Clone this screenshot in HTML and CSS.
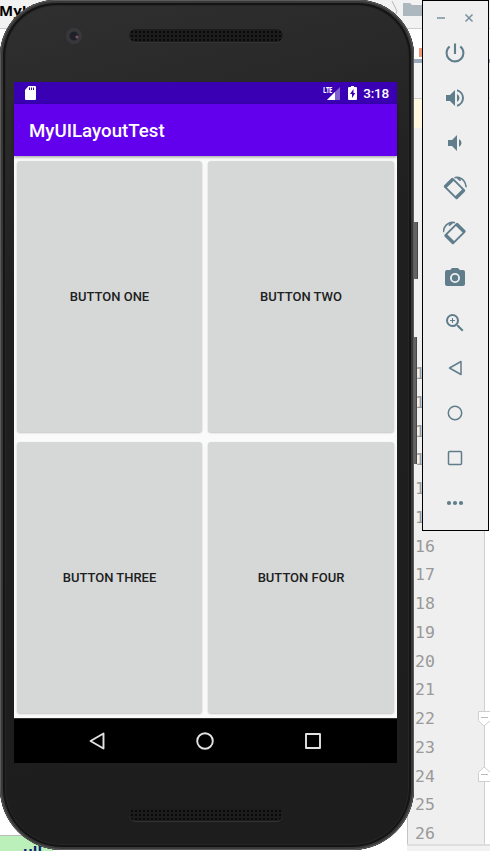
FILE: index.html
```html
<!DOCTYPE html>
<html lang="en">
<head>
<meta charset="utf-8">
<title>Emulator</title>
<link rel="stylesheet" href="styles.css">
</head>
<body>
<div class="desktop">
  <div class="ide">
    <div class="crumbs"><b>MyUI</b>
      <svg class="crumb-icons" width="46" height="28" viewBox="0 0 46 28"><path d="M1 1l5 10-5 12" fill="none" stroke="#b5b9bc"/><path d="M12 3h7l2 2h13v11H12z" fill="#adb7be"/></svg>
    </div>
    <div class="tabs"><span class="tab-mark"></span></div>
    <div class="toolstrip"></div>
    <div class="editor">
      <div class="gutter">
        <div class="current-line"></div>
        <ol class="lines">
          <li>10</li><li>11</li><li>12</li><li>13</li><li>14</li><li>15</li><li>16</li><li>17</li><li>18</li><li>19</li><li>20</li><li>21</li><li>22</li><li>23</li><li>24</li><li>25</li><li>26</li>
        </ol>
      </div>
      <svg class="fold fold-start" width="12" height="16" viewBox="0 0 12 16"><path d="M.5.5h12v9L6 15 .5 9.500z" fill="#fff" stroke="#cfcfcf"/><path d="M3 6.500h7" stroke="#bbb"/></svg>
      <svg class="fold fold-end" width="12" height="16" viewBox="0 0 12 16"><path d="M.5 15.500h12v-9L6 1 .5 6.500z" fill="#fff" stroke="#cfcfcf"/><path d="M3 8.500h7" stroke="#bbb"/></svg>
    </div>
    <div class="run-tab"><b>ull</b></div>
    <div class="ide-foot"></div>
  </div>

  <div class="side-key power-key"></div>
  <div class="side-key volume-key"></div>
  <div class="phone">
    <div class="bezel-top">
      <span class="camera"></span>
      <span class="speaker"></span>
    </div>
    <div class="screen">
      <div class="status">
        <svg class="sd" width="11" height="14" viewBox="0 0 11 14"><path d="M3.500 0H10q1 0 1 1v12q0 1-1 1H1q-1 0-1-1V4z" fill="#fff"/><path d="M4.500 1.500v2.500M6.500 1.500v2.500M8.500 1.500v2.500" stroke="#3a00b4"/></svg>
        <span class="lte">LTE</span>
        <svg class="signal" width="13" height="13" viewBox="0 0 13 13"><path d="M13 0v13H0z" fill="#8060d0"/><path d="M8 5v8H0z" fill="#fff"/></svg>
        <svg class="battery" width="9" height="14" viewBox="0 0 9 14"><path d="M3 0h3v1h2q1 0 1 1v11q0 1-1 1H1q-1 0-1-1V2q0-1 1-1h2z" fill="#fff"/><path d="M5.500 3L2 8h2v4l3.300-5H5.500z" fill="#3a00b4"/></svg>
        <span class="clock">3:18</span>
      </div>
      <div class="appbar">MyUILayoutTest</div>
      <div class="grid">
        <button>BUTTON ONE</button><button>BUTTON TWO</button>
        <button>BUTTON THREE</button><button>BUTTON FOUR</button>
      </div>
      <div class="nav">
        <svg width="18" height="20" viewBox="0 0 18 20"><path d="M15.500 2.500v15L2.500 10z"/></svg>
        <svg width="20" height="20" viewBox="0 0 20 20"><circle cx="10" cy="10" r="7.800"/></svg>
        <svg width="18" height="20" viewBox="0 0 18 20"><rect x="2" y="3" width="14" height="14"/></svg>
      </div>
    </div>
    <div class="bezel-bottom"><span class="speaker"></span></div>
  </div>

  <div class="toolbar">
    <div class="window-controls">
      <svg width="10" height="10" viewBox="0 0 10 10"><path d="M1 5h8"/></svg>
      <svg width="10" height="10" viewBox="0 0 10 10"><path d="M1.500 1.500l7 7M8.500 1.500l-7 7"/></svg>
    </div>
    <svg class="tool" viewBox="0 0 24 24"><path transform="translate(-.6 -.6) scale(1.050)" d="M13 3h-2v10h2V3zm4.830 2.170l-1.420 1.420A6.920 6.920 0 0 1 19 12a7 7 0 1 1-11.420-5.420L6.170 5.170A8.930 8.930 0 0 0 3 12a9 9 0 0 0 18 0c0-2.740-1.230-5.180-3.170-6.830z"/></svg>
    <svg class="tool" viewBox="0 0 24 24"><path d="M3 9v6h4l5 5V4L7 9H3zm13.500 3A4.500 4.500 0 0 0 14 7.970v8.050A4.480 4.480 0 0 0 16.500 12zM14 3.230v2.060a7 7 0 0 1 0 13.420v2.060a9 9 0 0 0 0-17.540z"/></svg>
    <svg class="tool" viewBox="0 0 24 24"><path d="M18.500 12A4.500 4.500 0 0 0 16 7.970v8.050A4.480 4.480 0 0 0 18.500 12zM5 9v6h4l5 5V4L9 9H5z"/></svg>
    <svg class="tool" viewBox="0 0 24 24"><g id="rotate"><g transform="rotate(45 11.500 12.500)"><path fill-rule="evenodd" d="M3.500 6h16Q21 6 21 7.500v10q0 1.500-1.500 1.500h-16Q2 19 2 17.500v-10Q2 6 3.500 6zM5.500 7.800v9.400h12V7.800z"/></g><path d="M11.500 1.800q2-.9 4.500-.2 6.500 2 7.200 9.700" fill="none" stroke="#607d8b" stroke-width="1.600"/><path d="M12 1l5 4.300 1.200-1.200L15.500 1z"/></g></svg>
    <svg class="tool" viewBox="0 0 24 24"><use href="#rotate" transform="translate(23.500 0) scale(-1 1)"/></svg>
    <svg class="tool" viewBox="0 0 24 24"><circle cx="12" cy="12" r="3.200"/><path d="M9 2L7.170 4H4a2 2 0 0 0-2 2v12c0 1.100.9 2 2 2h16a2 2 0 0 0 2-2V6a2 2 0 0 0-2-2h-3.170L15 2H9zm3 15a5 5 0 1 1 0-10 5 5 0 0 1 0 10z"/></svg>
    <svg class="tool" viewBox="0 0 24 24"><path d="M15.500 14h-.79l-.28-.27A6.470 6.470 0 0 0 16 9.500 6.500 6.500 0 1 0 9.500 16c1.610 0 3.090-.59 4.230-1.570l.27.28v.79l5 4.990L20.490 19l-4.990-5zm-6 0a4.500 4.500 0 1 1 0-9 4.500 4.500 0 0 1 0 9zm2.500-4h-2v2H9v-2H7V9h2V7h1v2h2v1z"/></svg>
    <svg class="tool line" viewBox="0 0 24 24"><path d="M18 5.500v13L6.500 12z"/></svg>
    <svg class="tool line" viewBox="0 0 24 24"><circle cx="12" cy="12" r="6.700"/></svg>
    <svg class="tool line" viewBox="0 0 24 24"><rect x="5.500" y="5.500" width="13" height="13" rx="1"/></svg>
    <svg class="tool" viewBox="0 0 24 24"><circle cx="6" cy="12" r="2.100"/><circle cx="12" cy="12" r="2.100"/><circle cx="18" cy="12" r="2.100"/></svg>
  </div>
</div>
</body>
</html>
```
FILE: styles.css
```css
* { box-sizing: border-box; }
body { margin: 0; }
svg { display: block; }

.desktop {
  position: relative;
  width: 490px;
  height: 851px;
  overflow: hidden;
  background: #fff;
  font-family: Roboto, sans-serif;
}

/* IDE window behind the emulator */
.ide { display: flex; flex-direction: column; height: 851px; }
.crumbs {
  display: flex;
  flex: none;
  justify-content: space-between;
  height: 29px;
  padding-right: 53px;
  background: #f2f2f2;
  border-bottom: 1px solid #cdcdcd;
  font: 15px/21px "Open Sans", sans-serif;
}
.crumbs b { margin-left: -1px; }
.crumb-icons { width: 46px; margin-right: 0; }
.tabs {
  flex: none;
  height: 34px;
  padding: 19px 0 0 419px;
  border-bottom: 4px solid #9ca9bc;
  background: #fff;
}
.tab-mark { display: block; width: 9px; height: 9px; background: #f39673; }
.toolstrip { flex: none; height: 36px; background: #f2f2f2; border-bottom: 1px solid #cdcdcd; }
.editor { position: relative; flex: 1; min-height: 0; padding-left: 407px; overflow: hidden; }
.gutter {
  width: 78px;
  height: 100%;
  background: #efefef;
  border-left: 1px solid #c4c4c4;
  border-right: 1px solid #cfcfcf;
}
.current-line { height: 29px; background: #fff8df; }
.lines {
  margin: 232px 0 0;
  padding: 0 0 0 7px;
  list-style: none;
  color: #999;
  font: 16.500px/28.750px "DejaVu Sans Mono", monospace;
}
.fold { position: absolute; right: 0; }
.fold-start { top: 612px; }
.fold-end { top: 667px; }
.run-tab {
  position: absolute;
  left: 0;
  top: 835px;
  width: 53px;
  height: 16px;
  padding: 4px 0 0 23px;
  overflow: hidden;
  border-top: 1px solid #b8bdb8;
  background: #bbf0bb;
  color: #102070;
  font: 15px/22px "Open Sans", sans-serif;
}
.ide-foot { flex: none; height: 7px; margin-left: 407px; background: #f2f2f2; border-top: 2px solid #dedede; }

/* Device frame */
.side-key { position: absolute; background: #656363; border-right: 1px solid #484646; }
.power-key { left: 413px; top: 222px; width: 5px; height: 57px; }
.volume-key { left: 412px; top: 337px; width: 5px; height: 127px; }
.phone {
  position: absolute;
  left: 0;
  top: 0;
  width: 414px;
  height: 850px;
  padding: 0 14px;
  border-radius: 56px 56px 62px 62px;
  background: linear-gradient(165deg, #303030 0, #292929 15%, #1f1f1f 32%, #1d1d1e 100%);
  box-shadow:
    inset 0 0 0 1px #5c5b5b,
    inset 0 0 0 3px #393838,
    inset 0 0 0 5px #141414,
    inset 0 0 0 6px #262626;
}
.bezel-top { display: flex; height: 82px; padding: 29px 0 0 52px; }
.camera {
  width: 16px;
  height: 16px;
  margin-top: -1px;
  border-radius: 50%;
  background: radial-gradient(circle at 11px 9px, #76545f 0 1px, transparent 2px), radial-gradient(circle, #20202a 0 4px, #38383a 5px 8px);
}
.speaker {
  width: 154px;
  height: 13px;
  border-radius: 7px;
  background: radial-gradient(circle, #090909 0 1px, transparent 1.400px) 1px 1px / 4px 4px, #1c1c1c;
  box-shadow: 0 1px 0 #333;
}
.bezel-top .speaker { margin-left: 47px; }
.bezel-bottom { display: flex; padding: 45px 0 0 115px; }

/* Android screen */
.screen { width: 383px; height: 681px; background: #fafafa; }
.status {
  display: flex;
  align-items: center;
  height: 22px;
  padding: 0 8px 0 11px;
  background: #3a00b4;
  color: #fff;
}
.lte {
  width: 10px;
  margin: -7px -6px 0 auto;
  font: 700 8px/8px "Open Sans", sans-serif;
  letter-spacing: -.5px;
  transform: scaleX(.75);
  transform-origin: left;
}
.signal { flex: none; }
.battery { margin: 0 6px 0 8px; }
.clock { font-size: 13.500px; font-weight: 500; line-height: 22px; letter-spacing: -.2px; }
.appbar {
  position: relative;
  height: 52px;
  padding-left: 15px;
  background: #6200ee;
  box-shadow: 0 1px 3px rgba(0, 0, 0, .4);
  color: #fff;
  font-size: 18.700px;
  font-weight: 500;
  line-height: 54px;
}
.grid {
  display: grid;
  grid-template: repeat(2, 271px) / 185px 186px;
  gap: 10px 6px;
  height: 562px;
  padding: 5px 0 0 3px;
}
.grid button {
  padding: 0;
  border: 0;
  border-radius: 3px;
  background: #d6d8d7;
  box-shadow: 0 1px 2px rgba(0, 0, 0, .22);
  color: #202020;
  font: 500 13px Roboto, sans-serif;
}
.nav {
  display: flex;
  justify-content: space-between;
  align-items: center;
  height: 45px;
  padding: 0 75px 1px 74px;
  border-top: 1px solid #303030;
  background: #000;
}
.nav svg { fill: none; stroke: #e2e2e2; stroke-width: 1.900; stroke-linejoin: round; }

/* Emulator controls */
.toolbar {
  position: absolute;
  left: 422px;
  top: 0;
  display: flex;
  flex-direction: column;
  align-items: center;
  gap: 21px;
  width: 67px;
  height: 531px;
  padding: 12px 2px 0 0;
  border: 1px solid #000;
  background: #efefef;
}
.window-controls { display: flex; gap: 18px; height: 10px; margin-bottom: -3px; }
.window-controls svg { fill: none; stroke: #78909c; stroke-width: 1.500; }
.tool { flex: none; width: 24px; height: 24px; fill: #607d8b; }
.line { fill: none; stroke: #607d8b; stroke-width: 1.500; stroke-linejoin: round; }
```
